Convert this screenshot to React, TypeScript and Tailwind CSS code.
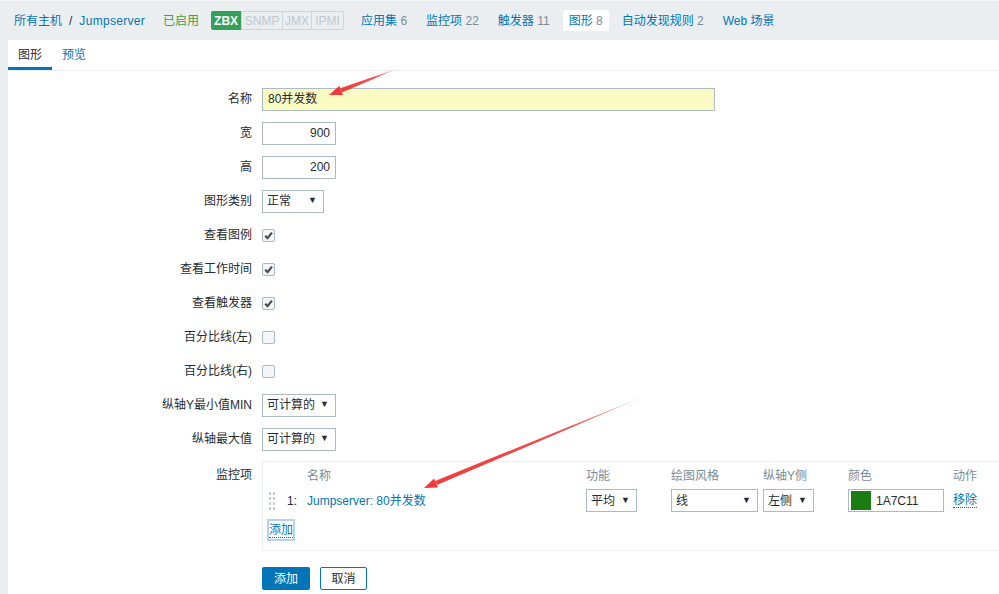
import React from "react";

const font = { fontFamily: '"Liberation Sans", Arial, "Noto Sans CJK SC", sans-serif' };

function Arrow({ x1, y1, x2, y2, id }: { x1: number; y1: number; x2: number; y2: number; id: string }) {
    // tail at (x1,y1), tip at (x2,y2)
    const dx = x2 - x1;
    const dy = y2 - y1;
    const len = Math.sqrt(dx * dx + dy * dy);
    const ux = dx / len;
    const uy = dy / len;
    const bx = x2 - ux * 13;
    const by = y2 - uy * 13;
    const px = -uy * 5;
    const py = ux * 5;
    return (
        <g>
            <defs>
                <linearGradient id={id} gradientUnits="userSpaceOnUse" x1={x1} y1={y1} x2={x2} y2={y2}>
                    <stop offset="0" stopColor="#ef3b3b" stopOpacity="0" />
                    <stop offset="0.35" stopColor="#ef3b3b" stopOpacity="0.9" />
                    <stop offset="1" stopColor="#ef3b3b" />
                </linearGradient>
            </defs>
            <polygon
                points={`${x1},${y1} ${bx + px * 0.45},${by + py * 0.45} ${bx - px * 0.45},${by - py * 0.45}`}
                fill={`url(#${id})`}
            />
            <polygon points={`${x2},${y2} ${bx + px},${by + py} ${bx - px},${by - py}`} fill="#ef3b3b" />
        </g>
    );
}

function Check({ checked }: { checked: boolean }) {
    return (
        <div className="w-[13px] h-[13px] border border-[#acbbc2] rounded-[2px] bg-[#f4f5f6] flex items-center justify-center">
            {checked && (
                <svg width="9" height="9" viewBox="0 0 10 10">
                    <path d="M1.3 5.2 L4 8 L8.8 1.8" stroke="#4a4a4a" strokeWidth="2.4" fill="none" />
                </svg>
            )}
        </div>
    );
}

function Select({ value, width }: { value: string; width: string }) {
    return (
        <div className={`${width} h-[23px] border border-[#acbbc2] bg-white flex items-center justify-between pl-[4px] pr-[6px] text-[#1f2c33]`}>
            <span>{value}</span>
            <span className="text-[9px]">▼</span>
        </div>
    );
}

function Row({ label, children }: { label: string; children: React.ReactNode }) {
    return (
        <div className="flex items-center h-[24px] gap-[10px]">
            <div className="w-[244px] shrink-0 text-right text-[#1f2c33]">{label}</div>
            {children}
        </div>
    );
}

function NavItem({ name, count }: { name: string; count?: string }) {
    return (
        <span className="text-[#0275b8]">
            {name}
            {count && <span className="text-[#768d99]"> {count}</span>}
        </span>
    );
}

export default function App() {
    return (
        <div className="relative w-[999px] h-[594px] overflow-hidden bg-[#ebeef0] text-[12px]" style={font}>
            {/* top nav */}
            <div className="h-[40px] border-t border-[#f5f6f7] flex items-center pl-[14px]">
                <span className="text-[#0275b8]">所有主机</span>
                <span className="mx-[7px] text-[#1f2c33]">/</span>
                <span className="text-[#0275b8] tracking-[0.3px]">Jumpserver</span>
                <span className="ml-[18px] text-[#429e47]">已启用</span>
                <div className="ml-[12px] flex h-[19px]">
                    <span className="w-[30px] bg-[#34a05b] text-white font-bold flex items-center justify-center rounded-l-[2px]">ZBX</span>
                    <span className="w-[42px] border border-[#ccd5d9] text-[#bfc9ce] flex items-center justify-center">SNMP</span>
                    <span className="w-[29px] border border-l-0 border-[#ccd5d9] text-[#bfc9ce] flex items-center justify-center">JMX</span>
                    <span className="w-[32px] border border-l-0 border-[#ccd5d9] text-[#bfc9ce] flex items-center justify-center rounded-r-[2px]">IPMI</span>
                </div>
                <div className="ml-[17px] flex items-center gap-[19px]">
                    <NavItem name="应用集" count="6" />
                    <NavItem name="监控项" count="22" />
                    <NavItem name="触发器" count="11" />
                    <span className="bg-white rounded-[2px] px-[6px] h-[21px] flex items-center -mx-[6px]">
                        <NavItem name="图形" count="8" />
                    </span>
                    <NavItem name="自动发现规则" count="2" />
                    <NavItem name="Web 场景" />
                </div>
            </div>

            {/* content */}
            <div className="ml-[8px] bg-white h-[554px]">
                <div className="h-[31px] border-b border-[#ebeef0] flex items-stretch">
                    <div className="w-[44px] flex items-center justify-center border-b-[3px] border-[#0275b8] text-[#1f2c33] pt-[3px]">图形</div>
                    <div className="ml-[10px] flex items-center text-[#0275b8]">预览</div>
                </div>

                <div className="pt-[16px] flex flex-col gap-[10px]">
                    <Row label="名称">
                        <div className="w-[453px] h-[23px] border border-[#acbbc2] bg-[#fafbc3] flex items-center px-[5px] text-[#1f2c33]">80并发数</div>
                    </Row>
                    <Row label="宽">
                        <div className="w-[74px] h-[23px] border border-[#acbbc2] flex items-center justify-end px-[5px] text-[#1f2c33]">900</div>
                    </Row>
                    <Row label="高">
                        <div className="w-[74px] h-[23px] border border-[#acbbc2] flex items-center justify-end px-[5px] text-[#1f2c33]">200</div>
                    </Row>
                    <Row label="图形类别">
                        <Select value="正常" width="w-[62px]" />
                    </Row>
                    <Row label="查看图例">
                        <Check checked />
                    </Row>
                    <Row label="查看工作时间">
                        <Check checked />
                    </Row>
                    <Row label="查看触发器">
                        <Check checked />
                    </Row>
                    <Row label="百分比线(左)">
                        <Check checked={false} />
                    </Row>
                    <Row label="百分比线(右)">
                        <Check checked={false} />
                    </Row>
                    <Row label="纵轴Y最小值MIN">
                        <Select value="可计算的" width="w-[74px]" />
                    </Row>
                    <Row label="纵轴最大值">
                        <Select value="可计算的" width="w-[74px]" />
                    </Row>

                    <div className="flex gap-[10px]">
                        <div className="w-[244px] shrink-0 text-right text-[#1f2c33] pt-[5px]">监控项</div>
                        <div className="w-[760px] shrink-0 h-[90px] border border-[#ebeef0] pl-[5px] pt-[5px]">
                            <div className="grid grid-cols-[19px_20px_279px_85px_92px_85px_105px_60px] text-[#768d99] h-[16px] items-center">
                                <span />
                                <span />
                                <span>名称</span>
                                <span>功能</span>
                                <span>绘图风格</span>
                                <span>纵轴Y侧</span>
                                <span>颜色</span>
                                <span>动作</span>
                            </div>
                            <div className="grid grid-cols-[19px_20px_279px_85px_92px_85px_105px_60px] items-center mt-[6px] h-[23px]">
                                <div className="grid grid-cols-2 gap-x-[2px] gap-y-[2px] w-[6px] pl-[1px]">
                                    {Array.from({ length: 8 }).map((_, i) => (
                                        <div key={i} className="w-[2px] h-[3px] bg-[#c5cdd1]" />
                                    ))}
                                </div>
                                <span className="text-[#1f2c33]">1:</span>
                                <span className="text-[#0275b8]">Jumpserver: 80并发数</span>
                                <Select value="平均" width="w-[51px]" />
                                <Select value="线" width="w-[87px]" />
                                <Select value="左侧" width="w-[51px]" />
                                <div className="w-[96px] h-[23px] border border-[#acbbc2] flex items-center pl-[2px] gap-[5px] text-[#1f2c33]">
                                    <div className="w-[20px] h-[19px] bg-[#1a7c11]" />
                                    <span>1A7C11</span>
                                </div>
                                <span className="text-[#0275b8] border-b border-dotted border-[#0275b8] w-fit leading-[14px]">移除</span>
                            </div>
                            <div className="mt-[9px] ml-[1px] w-fit outline outline-2 outline-[#b5d3ef] text-[#0275b8]">
                                <span className="border-b border-dotted border-[#0275b8] leading-[14px] inline-block">添加</span>
                            </div>
                        </div>
                    </div>

                    <div className="flex gap-[10px] pl-[254px] mt-[6px]">
                        <div className="w-[48px] h-[23px] bg-[#0275b8] text-white rounded-[2px] flex items-center justify-center">添加</div>
                        <div className="w-[47px] h-[23px] border border-[#0275b8] text-[#1f2c33] rounded-[2px] flex items-center justify-center">取消</div>
                    </div>
                </div>
            </div>

            <svg className="absolute left-0 top-0 pointer-events-none" width="999" height="594">
                <Arrow id="a1" x1={399} y1={68} x2={329} y2={95} />
                <Arrow id="a2" x1={652} y1={393} x2={424} y2={488} />
            </svg>
        </div>
    );
}
